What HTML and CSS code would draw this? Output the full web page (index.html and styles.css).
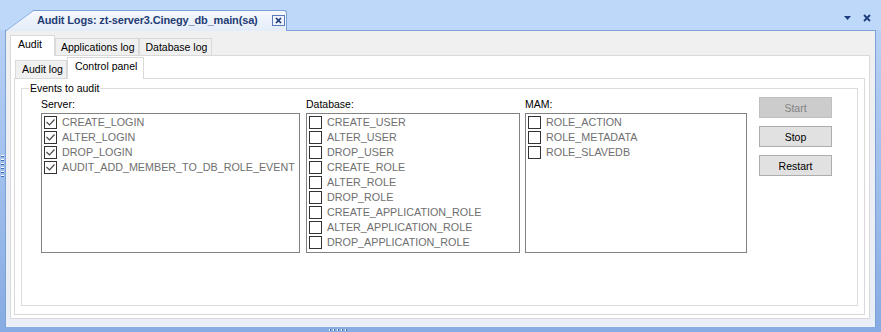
FILE: index.html
```html
<!DOCTYPE html>
<html lang="en">
<head>
    <meta charset="UTF-8">
    <title>Audit Logs</title>
    <link rel="stylesheet" href="styles.css">
</head>
<body>
    <div class="titlebar">
        <div class="doc-tab">
            <span class="doc-title">Audit Logs: zt-server3.Cinegy_db_main(sa)</span>
            <span class="doc-close">
                <svg width="7" height="7" viewBox="0 0 7 7"><path d="M1 1L6 6M6 1L1 6" stroke="#1c3a78" stroke-width="1.7" fill="none"/></svg>
            </span>
        </div>
        <div class="bar-tools">
            <svg width="7" height="4" viewBox="0 0 7 4"><polygon points="0,0 7,0 3.5,4" fill="#1c3c7e"/></svg>
            <svg width="8" height="8" viewBox="0 0 8 8"><path d="M1 1L7 7M7 1L1 7" stroke="#1c3c7e" stroke-width="1.8" fill="none"/></svg>
        </div>
    </div>

    <div class="main">
        <div class="edge edge-left"><span class="grip"></span></div>
        <div class="window">
            <div class="tabs tabs-outer">
                <span class="tab tab-active">Audit</span>
                <span class="tab">Applications log</span>
                <span class="tab">Database log</span>
            </div>
            <div class="page page-outer">
                <div class="tabs tabs-inner">
                    <span class="tab">Audit log</span>
                    <span class="tab tab-active">Control panel</span>
                </div>
                <div class="page page-inner">
                    <fieldset class="group">
                        <legend>Events to audit</legend>
                        <div class="events">
                            <div class="col col-server">
                                <div class="col-label">Server:</div>
                                <ul class="check-list">
                                    <li><span class="box"><svg viewBox="0 0 11 11"><polyline points="1.5,5 4.5,8 9.5,2.5"/></svg></span>CREATE_LOGIN</li>
                                    <li><span class="box"><svg viewBox="0 0 11 11"><polyline points="1.5,5 4.5,8 9.5,2.5"/></svg></span>ALTER_LOGIN</li>
                                    <li><span class="box"><svg viewBox="0 0 11 11"><polyline points="1.5,5 4.5,8 9.5,2.5"/></svg></span>DROP_LOGIN</li>
                                    <li><span class="box"><svg viewBox="0 0 11 11"><polyline points="1.5,5 4.5,8 9.5,2.5"/></svg></span>AUDIT_ADD_MEMBER_TO_DB_ROLE_EVENT</li>
                                </ul>
                            </div>
                            <div class="col col-db">
                                <div class="col-label">Database:</div>
                                <ul class="check-list">
                                    <li><span class="box"></span>CREATE_USER</li>
                                    <li><span class="box"></span>ALTER_USER</li>
                                    <li><span class="box"></span>DROP_USER</li>
                                    <li><span class="box"></span>CREATE_ROLE</li>
                                    <li><span class="box"></span>ALTER_ROLE</li>
                                    <li><span class="box"></span>DROP_ROLE</li>
                                    <li><span class="box"></span>CREATE_APPLICATION_ROLE</li>
                                    <li><span class="box"></span>ALTER_APPLICATION_ROLE</li>
                                    <li><span class="box"></span>DROP_APPLICATION_ROLE</li>
                                </ul>
                            </div>
                            <div class="col col-mam">
                                <div class="col-label">MAM:</div>
                                <ul class="check-list">
                                    <li><span class="box"></span>ROLE_ACTION</li>
                                    <li><span class="box"></span>ROLE_METADATA</li>
                                    <li><span class="box"></span>ROLE_SLAVEDB</li>
                                </ul>
                            </div>
                            <div class="actions">
                                <button class="btn" disabled>Start</button>
                                <button class="btn">Stop</button>
                                <button class="btn">Restart</button>
                            </div>
                        </div>
                    </fieldset>
                </div>
            </div>
        </div>
        <div class="edge edge-right"></div>
    </div>
    <div class="edge-bottom"><span class="grip-h"></span></div>
</body>
</html>
```

FILE: styles.css
```css
body {
    margin: 0;
    width: 881px;
    height: 332px;
    overflow: hidden;
    background: #bed8fa;
    font-family: "Liberation Sans", Arial, sans-serif;
    font-size: 10.5px;
    color: #000;
}
.titlebar {
    height: 30px;
    display: flex;
    align-items: flex-end;
}
.doc-tab {
    position: relative;
    z-index: 2;
    margin-left: 33px;
    margin-bottom: -1px;
    width: 254px;
    height: 21px;
    box-sizing: border-box;
    border: 1px solid #7ca1d7;
    border-left: none;
    border-bottom: none;
    border-radius: 0 3px 0 0;
    background: linear-gradient(#f6f9fd, #e3ecf9);
    display: flex;
    align-items: flex-start;
    padding: 2px 1px 0 4px;
}
.doc-tab::before {
    content: "";
    position: absolute;
    z-index: -1;
    left: -28px;
    top: -1px;
    bottom: 0;
    width: 34px;
    border-left: 1px solid #7ca1d7;
    border-top: 1px solid #7ca1d7;
    background: linear-gradient(#f6f9fd, #e3ecf9);
    transform: skewX(-54deg);
    transform-origin: bottom left;
}
.doc-title {
    font-weight: bold;
    font-size: 11px;
    line-height: 14px;
    letter-spacing: -0.15px;
    color: #1f3c74;
    white-space: nowrap;
}
.doc-close {
    margin-left: auto;
    margin-top: 2px;
    width: 13px;
    height: 11px;
    box-sizing: border-box;
    border: 1px solid #5b7cb8;
    background: #eef3fc;
    display: flex;
    align-items: center;
    justify-content: center;
}
.bar-tools {
    margin-left: auto;
    margin-right: 10px;
    margin-top: 14px;
    align-self: flex-start;
    display: flex;
    align-items: center;
    gap: 12px;
}
.bar-tools svg {
    display: block;
}
.main {
    display: flex;
    height: 297px;
}
.edge {
    width: 5px;
    background: linear-gradient(#b7d1f5, #87ace3);
}
.edge-left {
    box-sizing: border-box;
    padding-top: 125px;
}
.grip {
    display: block;
    width: 3px;
    height: 22px;
    margin-left: 1px;
    background: repeating-linear-gradient(#ffffff 0 1px, #3d6db5 1px 2px, transparent 2px 4px);
}
.window {
    flex: 1;
    min-width: 0;
    display: flex;
    flex-direction: column;
    border: 1px solid #7ca1d7;
    border-bottom: none;
    padding: 4px 5px 8px 4px;
    background: linear-gradient(#f0f0f0, #e9eef7);
}
.tabs {
    display: flex;
    align-items: flex-end;
    flex: none;
}
.tab {
    box-sizing: border-box;
    border: 1px solid #d9d9d9;
    border-bottom: none;
    background: #f0f0f0;
    line-height: 14px;
    padding: 1px 4px 0 5px;
    white-space: nowrap;
}
.tab-active {
    position: relative;
    z-index: 1;
    background: #fff;
    margin-bottom: -1px;
}
.tabs-outer {
    height: 20px;
}
.tabs-outer .tab {
    height: 17px;
}
.tabs-outer .tab-active {
    height: 21px;
    padding: 1px 12px 0 7px;
}
.tabs-inner {
    height: 21px;
}
.tabs-inner .tab {
    height: 18px;
    margin-left: 1px;
    padding: 1px 3px 0 6px;
}
.tabs-inner .tab-active {
    height: 22px;
    margin-left: 0;
    padding: 1px 6px 0 7px;
}
.page {
    flex: 1;
    min-height: 0;
    display: flex;
    flex-direction: column;
    border: 1px solid #d9d9d9;
    background: #fff;
}
.page-outer {
    padding: 1px 4px 3px 3px;
}
.page-inner {
    padding: 2px 6px 8px 6px;
}
.group {
    flex: 1;
    min-width: 0;
    margin: 0;
    padding: 0;
    border: 1px solid #dcdcdc;
}
.group legend {
    margin-left: 7px;
    padding: 0 1px;
    line-height: 14px;
}
.events {
    display: flex;
    padding: 2px 0 0 19px;
}
.col {
    display: flex;
    flex-direction: column;
    flex: none;
}
.col-server {
    width: 259px;
    margin-right: 6px;
}
.col-db {
    width: 214px;
    margin-right: 5px;
}
.col-mam {
    width: 222px;
    margin-right: 12px;
}
.col-label {
    line-height: 14px;
}
.check-list {
    list-style: none;
    margin: 2px 0 0;
    padding: 0 2px;
    height: 140px;
    box-sizing: border-box;
    border: 1px solid #828282;
}
.check-list li {
    display: flex;
    align-items: center;
    height: 15px;
    font-size: 10.75px;
    color: #6f6f6f;
    white-space: nowrap;
}
.box {
    flex: none;
    width: 13px;
    height: 13px;
    box-sizing: border-box;
    border: 1px solid #333;
    background: #fff;
    margin: 1px 5px 0 0;
}
.box svg {
    display: block;
    width: 11px;
    height: 11px;
    fill: none;
    stroke: #4a4a4a;
    stroke-width: 1.2;
}
.actions {
    display: flex;
    flex-direction: column;
    gap: 8px;
    width: 73px;
    flex: none;
}
.btn {
    height: 21px;
    box-sizing: border-box;
    border: 1px solid #adadad;
    background: #e1e1e1;
    font: inherit;
    color: #000;
    padding: 0;
}
.btn:disabled {
    background: #cccccc;
    border-color: #bfbfbf;
    color: #838383;
}
.edge-bottom {
    height: 5px;
    display: flex;
    align-items: center;
    padding-left: 329px;
    background: #87ace3;
}
.grip-h {
    display: block;
    width: 19px;
    height: 2px;
    background: repeating-linear-gradient(90deg, #ffffff 0 1px, #3d6db5 1px 2px, transparent 2px 4px);
}
```
